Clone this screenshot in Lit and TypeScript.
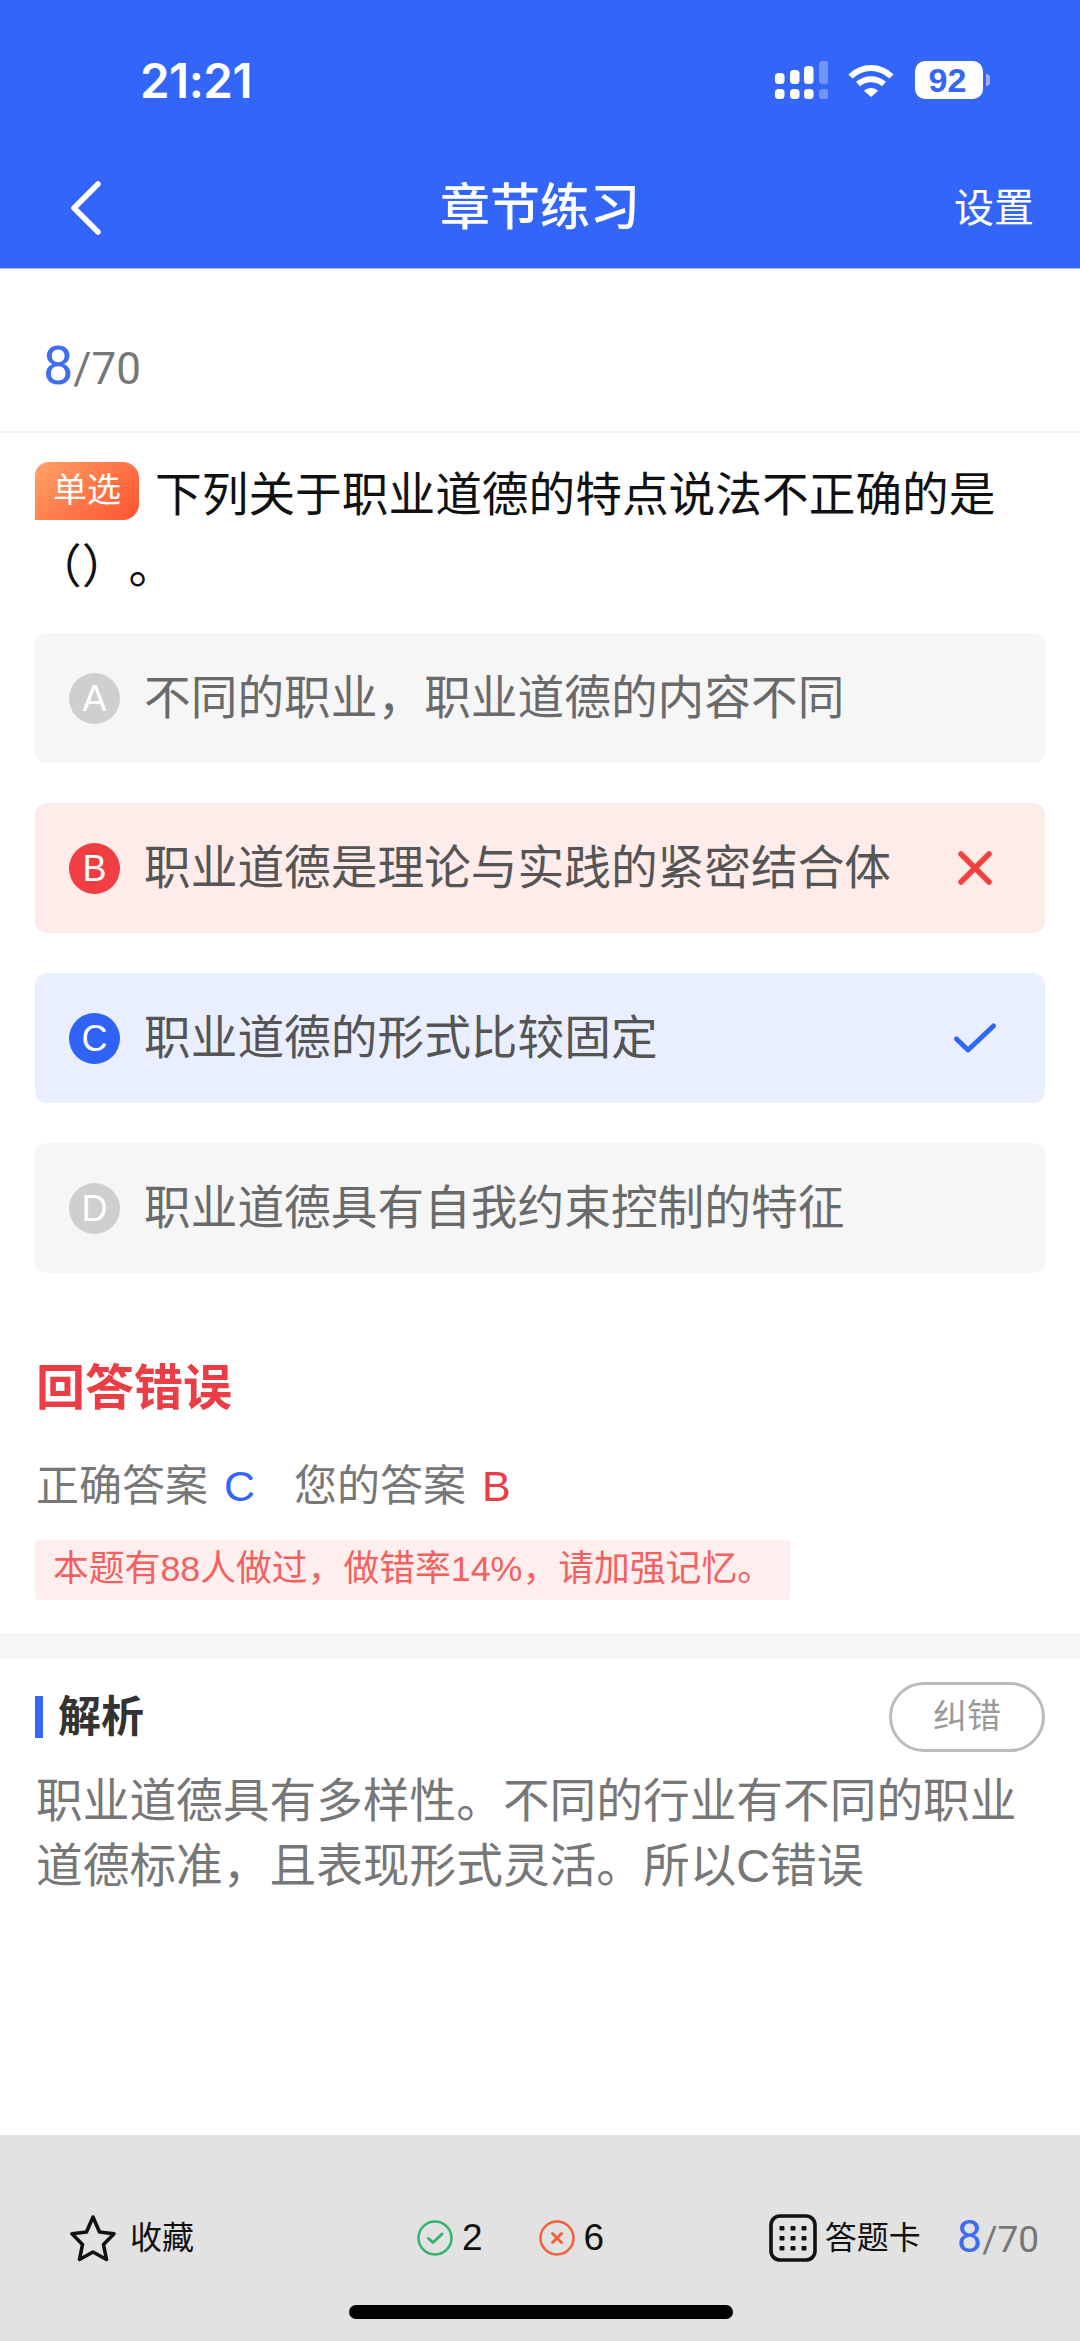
import { LitElement, html, css, svg } from "lit";
import { customElement } from "lit/decorators.js";

type Opt = { k: string; t: string; s: "" | "bad" | "good" };
const OPTS: Opt[] = [
  { k: "A", t: "不同的职业，职业道德的内容不同", s: "" },
  { k: "B", t: "职业道德是理论与实践的紧密结合体", s: "bad" },
  { k: "C", t: "职业道德的形式比较固定", s: "good" },
  { k: "D", t: "职业道德具有自我约束控制的特征", s: "" },
];

@customElement("app-root")
export class AppRoot extends LitElement {
  static styles = css`
    :host {
      display: block;
      width: 1080px;
      height: 2341px;
      position: relative;
      overflow: hidden;
      background: #fff;
      font-family: "Liberation Sans", "Noto Sans CJK SC", sans-serif;
      text-spacing-trim: space-all;
    }
    .page { display: flex; flex-direction: column; height: 2341px; }
    header { height: 269px; background: #3366f8; color: #fff; flex: none; box-sizing: border-box; border-bottom: 1px solid #a9c0fb; }
    .status { height: 61px; padding: 61px 90px 0 140px; display: flex; align-items: flex-start; }
    .time { font: 600 47.500px/40px Inter, sans-serif; width: 114px; white-space: nowrap; letter-spacing: -0.5px; }
    .status-icons { margin-left: auto; display: flex; align-items: flex-start; }
    .signal { width: 53px; height: 38px; display: block; }
    .wifi { width: 46px; height: 34px; margin: 2px 21px 0 20px; display: block; }
    .battery { display: flex; align-items: center; }
    .batt-body { width: 65px; height: 38px; border-radius: 10px; background: #fff; color: #3366f8; font: 700 34px/38px "Liberation Sans", sans-serif; text-align: center; border-right: 3px solid rgba(255,255,255,.45); box-sizing: content-box; }
    .batt-nub { width: 4px; height: 12px; margin-left: 3px; border-radius: 0 6px 6px 0; background: rgba(255,255,255,.5); }
    .nav { display: grid; grid-template-columns: 1fr auto 1fr; align-items: center; padding: 0 46px 0 68px; margin-top: 39px; height: 94px; }
    .back { width: 34px; height: 54px; display: block; }
    .title { font-size: 50px; font-weight: 500; line-height: 60px; margin-left: -22px; }
    .settings { justify-self: end; font-size: 40px; line-height: 50px; }

    .progress { height: 164px; box-sizing: border-box; padding: 72px 0 0 43px; border-bottom: 2px solid #f3f3f3; flex: none; color: #777; font: 400 44px/50px Roboto, sans-serif; white-space: nowrap; }
    .cur { color: #3f6df0; font-size: 54px; }

    .question { padding: 26px 35px 0; font-size: 46.700px; line-height: 72px; color: #111; height: 200px; box-sizing: border-box; flex: none; }
    .tag { display: inline-block; width: 104px; height: 58px; line-height: 56px; text-align: center; font-size: 34px; color: #fff; vertical-align: 9px; margin-right: 16px; border-radius: 14px 16px 16px 0; background: linear-gradient(135deg, #ffa266, #ff5230); }

    .options { padding: 0 35px; display: flex; flex-direction: column; gap: 40px; flex: none; }
    .opt { height: 130px; border-radius: 12px; display: flex; align-items: center; padding: 0 34px; background: #f6f6f6; color: #6a6a6a; font-size: 46.700px; }
    .opt.bad { background: #feeceb; color: #555; }
    .opt.good { background: #e9effe; color: #555; }
    .opt-text { padding-bottom: 10px; }
    .dot { width: 51px; height: 51px; border-radius: 50%; background: #cfcfcf; color: #fff; font-size: 36px; line-height: 51px; text-align: center; flex: none; margin-right: 24px; }
    .bad .dot { background: #f03e42; }
    .good .dot { background: #2f63f5; }
    .mark { margin-left: auto; display: block; width: 50px; height: 50px; margin-right: 11px; }

    .result { padding: 85px 36px 0; flex: none; }
    .verdict { font-size: 49px; font-weight: 700; color: #ea3d45; line-height: 60px; }
    .answers { margin-top: 38px; font-size: 43px; line-height: 60px; color: #777; display: flex; }
    .answers b { font-weight: 400; margin-left: 16px; }
    .answers .c { color: #3366f8; margin-right: 39px; }
    .answers .r { color: #ea3d45; }
    .stat { margin: 24px 0 0 -1px; width: 755px; height: 60px; box-sizing: border-box; padding-left: 18px; background: #ffeeee; border-radius: 4px; color: #f2615f; font-size: 35.800px; line-height: 58px; white-space: nowrap; }
    .band { height: 26px; background: #f4f6f8; margin-top: 33px; flex: none; }

    .analysis { padding: 23px 35px 0; flex: 1; }
    .a-head { display: flex; align-items: center; height: 70px; }
    .a-title { border-left: 8px solid #3366f8; padding-left: 15px; font-size: 43px; font-weight: 700; color: #333; line-height: 42px; height: 42px; }
    .fix { margin-left: auto; width: 156px; height: 70px; box-sizing: border-box; border: 3px solid #bbb; border-radius: 35px; color: #9a9a9a; font-size: 34px; line-height: 62px; text-align: center; }
    .a-body { margin-top: 17px; font-size: 46.700px; line-height: 65px; color: #777; padding-left: 1px; }

    footer { height: 206px; background: #e2e2e2; flex: none; box-sizing: border-box; padding: 79px 41px 0 70px; display: flex; align-items: flex-start; color: #111; }
    .f-group { display: flex; align-items: center; height: 48px; white-space: nowrap; }
    .f-label { font-size: 32px; line-height: 48px; }
    .star { width: 46px; height: 48px; display: block; margin-right: 14px; }
    .stats { margin-left: 223px; font-size: 37px; }
    .ring { width: 36px; height: 36px; display: block; margin-right: 9px; }
    .stats .second { margin-left: 56px; }
    .right { margin-left: auto; }
    .grid-ic { width: 48px; height: 48px; display: block; margin-right: 8px; }
    .f-prog { margin-left: 36px; font: 400 37px/48px Roboto, sans-serif; color: #777; }
    .f-prog .n { font-size: 45px; color: #3f6df0; }
    .home { position: absolute; left: 349px; top: 2305px; width: 384px; height: 14px; border-radius: 7px; background: #000; }
  `;

  private signal() {
    const cols = [
      [775, 73, 11], [790, 70, 14], [804, 66, 18], [819, 61, 23],
    ];
    return html`<svg class="signal" viewBox="775 61 53 38" fill="#fff">
      ${cols.map(([x, y, h], i) => svg`
        <g opacity=${i === 3 ? 0.3 : 1}>
          <rect x=${x} y=${y} width="9.5" height=${h} rx="3.5"></rect>
          <rect x=${x} y="89" width="9.5" height="10" rx="3.5"></rect>
        </g>`)}
    </svg>`;
  }

  render() {
    return html`
      <div class="page">
        <header>
          <div class="status">
            <div class="time">21:21</div>
            <div class="status-icons">
              ${this.signal()}
              <svg class="wifi" viewBox="0 0 46 34" fill="none" stroke="#fff" stroke-width="6">
                <path d="M2.5 13.5C14 2 32 2 43.500 13.500"></path>
                <path d="M10 21C17.500 14.500 28.500 14.500 36 21"></path>
                <path d="M16 27.800L23 34L30 27.800C26 24 20 24 16 27.800Z" fill="#fff" stroke="none"></path>
              </svg>
              <div class="battery">
                <div class="batt-body">92</div>
                <div class="batt-nub"></div>
              </div>
            </div>
          </div>
          <div class="nav">
            <svg class="back" viewBox="0 0 34 54" fill="none" stroke="#fff" stroke-width="5.500" stroke-linecap="round" stroke-linejoin="round">
              <path d="M30 3L6 27L30 51"></path>
            </svg>
            <div class="title">章节练习</div>
            <div class="settings">设置</div>
          </div>
        </header>

        <div class="progress"><span class="cur">8</span>/70</div>

        <div class="question"><span class="tag">单选</span>下列关于职业道德的特点说法不正确的是（）。</div>

        <div class="options">
          ${OPTS.map(
            (o) => html`<div class="opt ${o.s}">
              <span class="dot">${o.k}</span><span class="opt-text">${o.t}</span>
              ${o.s === "bad"
                ? html`<svg class="mark" viewBox="0 0 50 50" fill="none" stroke="#f0403f" stroke-width="5.500" stroke-linecap="round"><path d="M11 11L39 39M39 11L11 39"></path></svg>`
                : o.s === "good"
                ? html`<svg class="mark" viewBox="0 0 50 50" fill="none" stroke="#3366f8" stroke-width="5" stroke-linecap="round" stroke-linejoin="round"><path d="M6.500 26L18 37L43.500 13"></path></svg>`
                : ""}
            </div>`
          )}
        </div>

        <div class="result">
          <div class="verdict">回答错误</div>
          <div class="answers">
            <span>正确答案</span><b class="c">C</b><span>您的答案</span><b class="r">B</b>
          </div>
          <div class="stat">本题有88人做过，做错率14%，请加强记忆。</div>
        </div>
        <div class="band"></div>

        <div class="analysis">
          <div class="a-head">
            <div class="a-title">解析</div>
            <div class="fix">纠错</div>
          </div>
          <div class="a-body">职业道德具有多样性。不同的行业有不同的职业<br />道德标准，且表现形式灵活。所以C错误</div>
        </div>

        <footer>
          <div class="f-group">
            <svg class="star" viewBox="0 0 46 48" fill="none" stroke="#111" stroke-width="3.600" stroke-linejoin="round">
              <path d="M23 3L29.500 18L44 19.800L33.500 30.500L36.500 45.500L23 38L9.500 45.500L12.500 30.500L2 19.800L16.500 18Z"></path>
            </svg>
            <span class="f-label">收藏</span>
          </div>
          <div class="f-group stats">
            <svg class="ring" viewBox="0 0 36 36" fill="none" stroke="#2fb56c" stroke-width="2.500" stroke-linecap="round" stroke-linejoin="round">
              <circle cx="18" cy="18" r="16.500"></circle>
              <path d="M11.500 18.500L16 22.500L25 14" stroke-width="3"></path>
            </svg>
            <span>2</span>
            <svg class="ring second" viewBox="0 0 36 36" fill="none" stroke="#f5603a" stroke-width="2.500" stroke-linecap="round">
              <circle cx="18" cy="18" r="16.500"></circle>
              <path d="M13.500 13.500L22.500 22.500M22.500 13.500L13.500 22.500" stroke-width="3"></path>
            </svg>
            <span>6</span>
          </div>
          <div class="f-group right">
            <svg class="grid-ic" viewBox="0 0 48 48" fill="none">
              <rect x="2" y="2" width="44" height="44" rx="9" stroke="#111" stroke-width="3.600"></rect>
              <g fill="#111">
                ${[14, 24, 34].flatMap((y) =>
                  [13, 24, 35].map((x) => svg`<rect x=${x - 2.5} y=${y - 2} width="5" height="4.500" rx="1"></rect>`)
                )}
              </g>
            </svg>
            <span class="f-label">答题卡</span>
            <span class="f-prog"><span class="n">8</span>/70</span>
          </div>
        </footer>
      </div>
      <div class="home"></div>
    `;
  }
}
